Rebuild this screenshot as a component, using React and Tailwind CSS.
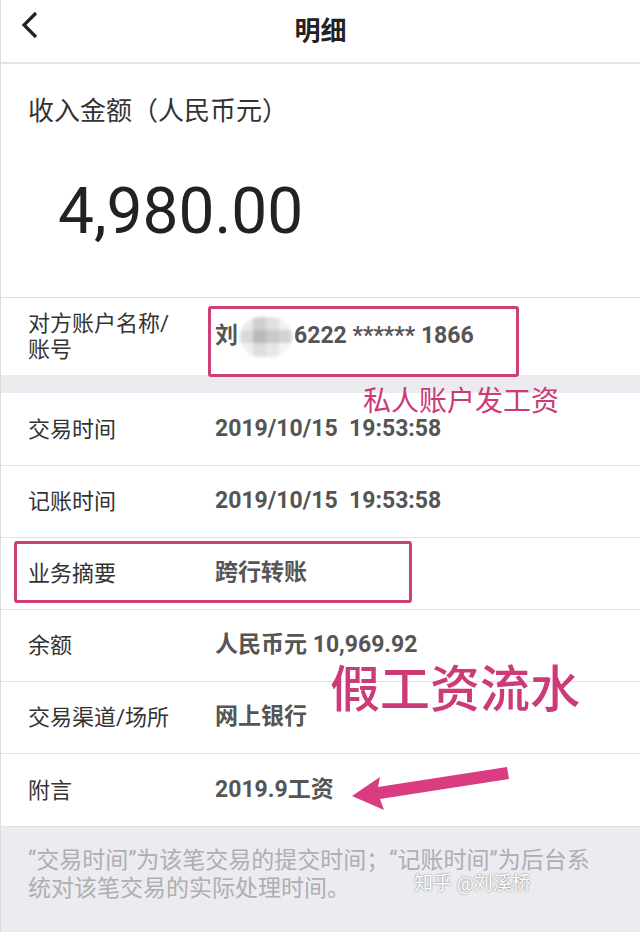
import React from 'react'

const font = { fontFamily: 'Roboto, "Noto Sans CJK SC", sans-serif' }

const rows = [
  { label: '交易时间', value: '2019/10/15\u00a0\u00a019:53:58', h: 'h-[73px]' },
  { label: '记账时间', value: '2019/10/15\u00a0\u00a019:53:58', h: 'h-[72px]' },
  { label: '业务摘要', value: '跨行转账', h: 'h-[72px]' },
  { label: '余额', value: '人民币元 10,969.92', h: 'h-[72px]' },
  { label: '交易渠道/场所', value: '网上银行', h: 'h-[72px]' },
  { label: '附言', value: '2019.9工资', h: 'h-[73px]' },
]

// blurred name mosaic
const Mosaic = () => (
  <div className="grid grid-cols-4 w-[52px] h-[40px] mx-[2px] blur-[1.5px] opacity-80 rounded-full overflow-hidden">
    <div className="bg-[#e6e6e6]" />
    <div className="bg-[#c4c4c4]" />
    <div className="bg-[#d8d8d8]" />
    <div className="bg-[#eeeeee]" />
    <div className="bg-[#d0d0d0]" />
    <div className="bg-[#a9a9a9]" />
    <div className="bg-[#bdbdbd]" />
    <div className="bg-[#c9c9c9]" />
    <div className="bg-[#ececec]" />
    <div className="bg-[#d6d6d6]" />
    <div className="bg-[#e2e2e2]" />
    <div className="bg-[#f2f2f2]" />
  </div>
)

export default function App() {
  return (
    <div style={font} className="relative w-[640px] h-[932px] overflow-hidden bg-white border-l border-[#dcdcdc]">
      {/* Header */}
      <div className="relative h-16 flex items-center justify-center border-b-2 border-[#e4e4e4]">
        <svg className="absolute left-[20px] top-[11px]" width="20" height="30" viewBox="0 0 20 30">
          <polyline points="15,2 3,14 15,26" fill="none" stroke="#222" strokeWidth="3.2" strokeLinejoin="miter" />
        </svg>
        <span className="text-[26px] font-bold text-[#222] leading-none">明细</span>
      </div>

      {/* Amount */}
      <div className="h-[234px] border-b border-[#dedede] pl-[27px]">
        <div className="pt-[30px] text-[26px] leading-[34px] text-[#333]">收入金额（人民币元）</div>
        <div className="mt-[52px] pl-[30px] text-[64px] leading-[64px] text-[#222]">4,980.00</div>
      </div>

      {/* Counterparty */}
      <div className="h-[77px] flex items-center">
        <div className="w-[214px] shrink-0 pl-[27px] text-[22px] leading-[26px] text-[#333]">
          对方账户名称/
          <br />
          账号
        </div>
        <div className="flex items-center text-[23px] font-bold text-[#555]">
          <span>刘</span>
          <Mosaic />
          <span>6222 ****** 1866</span>
        </div>
      </div>

      <div className="h-[18px] bg-[#ebebef]" />

      {/* Detail rows */}
      {rows.map((r) => (
        <div key={r.label} className={`${r.h} flex items-center border-b border-[#e2e2e2]`}>
          <div className="w-[214px] shrink-0 pl-[27px] text-[22px] text-[#333]">{r.label}</div>
          <div className="text-[23px] font-bold text-[#555]">{r.value}</div>
        </div>
      ))}

      {/* Footer note */}
      <div className="h-[120px] bg-[#ebebf0] pl-[27px] pt-[22px] flex flex-col items-start gap-[4px] text-[23px] leading-[24px] text-[#aeaeb3]">
        <span>“交易时间”为该笔交易的提交时间；“记账时间”为后台系</span>
        <span>统对该笔交易的实际处理时间。</span>
      </div>

      {/* Annotations */}
      <div className="absolute left-[207px] top-[306px] w-[311px] h-[71px] border-[3px] border-[#cc3f77] rounded-[3px]" />
      <div className="absolute left-[362px] top-[386px] text-[28px] leading-[32px] text-[#cc3a78]">私人账户发工资</div>
      <div className="absolute left-[13px] top-[541px] w-[398px] h-[62px] border-[3px] border-[#cc3f77] rounded-[3px]" />
      <div className="absolute left-[329px] top-[664px] text-[50px] leading-[52px] font-medium text-[#cc3a78]">假工资流水</div>
      <svg className="absolute left-0 top-0 pointer-events-none" width="640" height="932" viewBox="0 0 640 932">
        <polygon
          points="351,796 379,777 377,787 506,767 508,779 379,799 383,810"
          fill="#d93c80"
        />
      </svg>
      <div className="absolute left-[413px] top-[874px] text-[19px] leading-[19px] text-white [text-shadow:0_0_2px_rgba(0,0,0,0.55)]">
        知乎 @刘溪桥
      </div>
    </div>
  )
}
